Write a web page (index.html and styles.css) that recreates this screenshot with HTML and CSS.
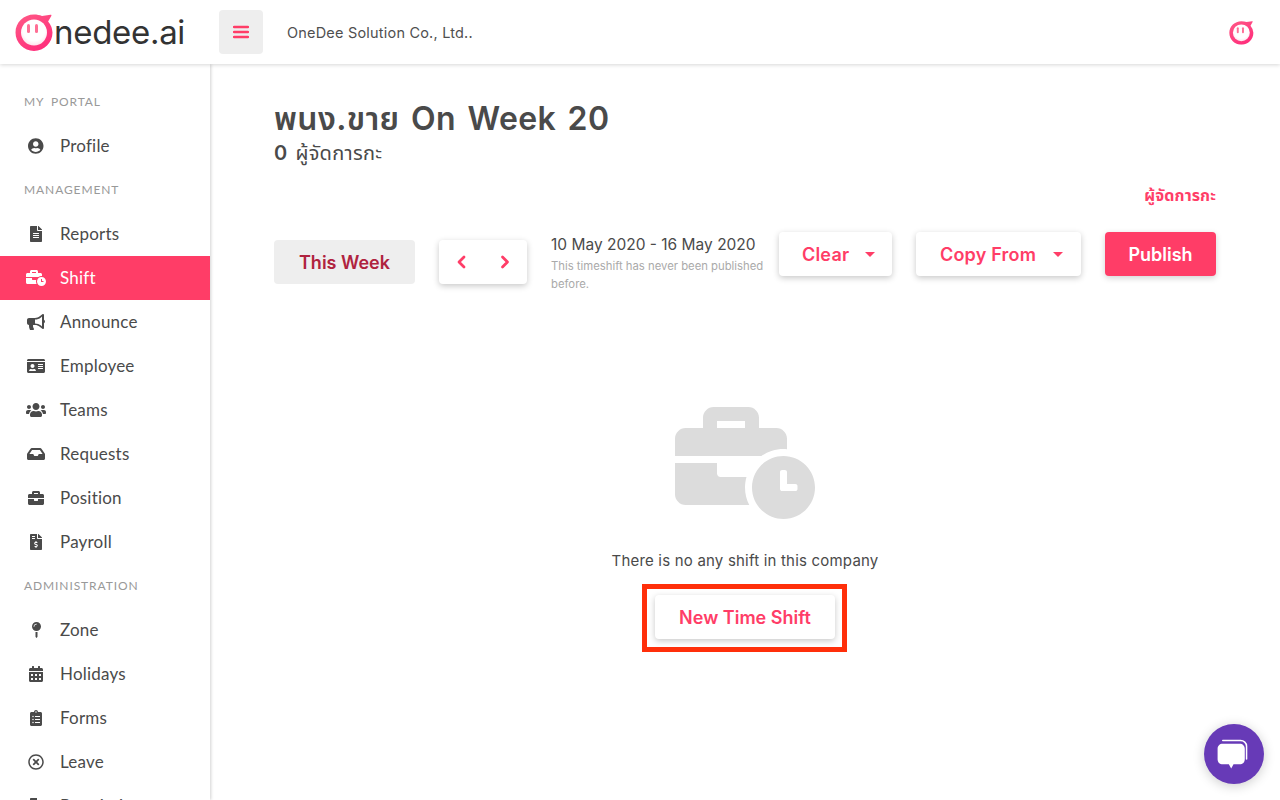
FILE: index.html
```html
<!DOCTYPE html>
<html lang="en">
<head>
<meta charset="utf-8">
<title>OneDee Shift</title>
<link rel="stylesheet" href="styles.css">
</head>
<body>
<header class="topbar">
  <div class="logo">
    <svg class="logo-mark" viewBox="0 0 40 38"><use href="#face"/></svg>
    <span class="logo-text">nedee.ai</span>
  </div>
  <button class="menu-btn" aria-label="Menu">
    <svg viewBox="0 0 16 14" class="menu-icon"><path d="M1 2h14M1 7h14M1 12h14"/></svg>
  </button>
  <span class="company">OneDee Solution Co., Ltd..</span>
  <svg class="avatar" viewBox="0 0 40 38"><use href="#face"/></svg>
</header>

<div class="layout">
  <nav class="sidebar">
    <div class="nav-label">MY PORTAL</div>
    <a class="nav-item"><span class="nav-ico"><svg viewBox="0 0 496 512"><path d="M248 8C111 8 0 119 0 256s111 248 248 248 248-111 248-248S385 8 248 8zm0 96c48.6 0 88 39.4 88 88s-39.4 88-88 88-88-39.4-88-88 39.4-88 88-88zm0 344c-58.7 0-111.3-26.6-146.5-68.2 18.8-35.4 55.6-59.8 98.5-59.8 2.4 0 4.8.4 7.1 1.1 13 4.2 26.6 6.9 40.9 6.9 14.3 0 28-2.7 40.9-6.9 2.3-.7 4.7-1.1 7.1-1.1 42.9 0 79.7 24.4 98.5 59.8C359.3 421.4 306.7 448 248 448z"/></svg></span><span class="nav-text">Profile</span></a>
    <div class="nav-label">MANAGEMENT</div>
    <a class="nav-item"><span class="nav-ico"><svg viewBox="0 0 384 512"><path d="M224 136V0H24C10.7 0 0 10.7 0 24v464c0 13.3 10.7 24 24 24h336c13.3 0 24-10.7 24-24V160H248c-13.2 0-24-10.8-24-24zm64 236c0 6.6-5.4 12-12 12H108c-6.6 0-12-5.4-12-12v-8c0-6.6 5.4-12 12-12h168c6.6 0 12 5.4 12 12v8zm0-64c0 6.6-5.4 12-12 12H108c-6.6 0-12-5.4-12-12v-8c0-6.6 5.4-12 12-12h168c6.6 0 12 5.4 12 12v8zm0-72v8c0 6.6-5.4 12-12 12H108c-6.6 0-12-5.4-12-12v-8c0-6.6 5.4-12 12-12h168c6.6 0 12 5.4 12 12zm96-114.1v6.1H256V0h6.1c6.4 0 12.5 2.5 17 7l97.9 98c4.5 4.5 7 10.6 7 16.9z"/></svg></span><span class="nav-text">Reports</span></a>
    <a class="nav-item is-active"><span class="nav-ico"><svg viewBox="0 0 640 512"><use href="#business-time"/></svg></span><span class="nav-text">Shift</span></a>
    <a class="nav-item"><span class="nav-ico"><svg viewBox="0 0 576 512"><path d="M544 184.88V32.01C544 23.26 537.02 0 512.01 0H512c-7.12 0-14.19 2.38-19.98 7.02l-85.03 68.03C364.28 109.19 310.66 128 256 128H64c-35.35 0-64 28.65-64 64v96c0 35.35 28.65 64 64 64l-.48 32c0 39.77 9.26 77.35 25.56 110.94 5.19 10.69 16.52 17.06 28.4 17.06h74.28c26.05 0 41.69-29.84 25.9-50.56-16.4-21.52-26.15-48.36-26.15-77.44 0-11.11 1.62-21.79 4.41-32H256c54.66 0 108.28 18.81 150.98 52.95l85.03 68.03a32.023 32.023 0 0 0 19.98 7.02c24.92 0 32-22.78 32-32V295.13c19.05-11.09 32-31.49 32-55.12.01-23.64-12.94-44.04-31.99-55.13zM480 397.39l-33.02-26.41C392.96 327.77 325.51 304 256 304v-128c69.51 0 136.96-23.77 190.98-66.98L480 82.61v314.78z"/></svg></span><span class="nav-text">Announce</span></a>
    <a class="nav-item"><span class="nav-ico"><svg viewBox="0 0 576 512"><path d="M528 32H48C21.5 32 0 53.5 0 80v16h576V80c0-26.5-21.5-48-48-48zM0 432c0 26.5 21.5 48 48 48h480c26.5 0 48-21.5 48-48V128H0v304zm352-232c0-4.4 3.6-8 8-8h144c4.4 0 8 3.6 8 8v16c0 4.4-3.6 8-8 8H360c-4.4 0-8-3.6-8-8v-16zm0 64c0-4.4 3.6-8 8-8h144c4.4 0 8 3.6 8 8v16c0 4.4-3.6 8-8 8H360c-4.4 0-8-3.6-8-8v-16zm0 64c0-4.4 3.6-8 8-8h144c4.4 0 8 3.6 8 8v16c0 4.4-3.6 8-8 8H360c-4.4 0-8-3.6-8-8v-16zM176 192c35.3 0 64 28.7 64 64s-28.7 64-64 64-64-28.7-64-64 28.7-64 64-64zM67.1 396.2C75.5 370.5 99.6 352 128 352h8.2c12.3 5.1 25.7 8 39.8 8s27.6-2.9 39.8-8h8.2c28.4 0 52.5 18.5 60.9 44.2 3.2 9.9-5.2 19.8-15.6 19.8H82.7c-10.4 0-18.8-10-15.6-19.8z"/></svg></span><span class="nav-text">Employee</span></a>
    <a class="nav-item"><span class="nav-ico"><svg viewBox="0 0 640 512"><path d="M96 224c35.3 0 64-28.7 64-64s-28.7-64-64-64-64 28.7-64 64 28.7 64 64 64zm448 0c35.3 0 64-28.7 64-64s-28.7-64-64-64-64 28.7-64 64 28.7 64 64 64zm32 32h-64c-17.6 0-33.5 7.1-45.1 18.6 40.3 22.1 68.9 62 75.1 109.4h66c17.7 0 32-14.3 32-32v-32c0-35.3-28.7-64-64-64zm-256 0c61.9 0 112-50.1 112-112S381.9 32 320 32 208 82.1 208 144s50.1 112 112 112zm76.8 32h-8.3c-20.8 10-43.9 16-68.5 16s-47.6-6-68.5-16h-8.3C179.6 288 128 339.6 128 403.2V432c0 26.5 21.5 48 48 48h288c26.5 0 48-21.5 48-48v-28.8c0-63.6-51.6-115.2-115.2-115.2zm-223.7-13.4C161.5 263.1 145.6 256 128 256H64c-35.3 0-64 28.7-64 64v32c0 17.7 14.3 32 32 32h65.9c6.3-47.4 34.9-87.3 75.2-109.4z"/></svg></span><span class="nav-text">Teams</span></a>
    <a class="nav-item"><span class="nav-ico"><svg viewBox="0 0 576 512"><path d="M567.938 243.908L462.25 85.374A48.003 48.003 0 0 0 422.311 64H153.689a48 48 0 0 0-39.938 21.374L8.062 243.908A47.994 47.994 0 0 0 0 270.533V400c0 26.51 21.49 48 48 48h480c26.51 0 48-21.49 48-48V270.533a47.994 47.994 0 0 0-8.062-26.625zM162.252 128h251.497l85.333 128H376l-32 64H232l-32-64H76.918l85.334-128z"/></svg></span><span class="nav-text">Requests</span></a>
    <a class="nav-item"><span class="nav-ico"><svg viewBox="0 0 512 512"><path d="M320 336c0 8.84-7.16 16-16 16h-96c-8.84 0-16-7.16-16-16v-48H0v144c0 25.6 22.4 48 48 48h416c25.6 0 48-21.5 48-48V288H320v48zm144-208h-80V80c0-25.6-22.4-48-48-48H176c-25.6 0-48 22.4-48 48v48H48c-25.6 0-48 22.4-48 48v80h512v-80c0-25.6-22.4-48-48-48zm-144 0H192V96h128v32z"/></svg></span><span class="nav-text">Position</span></a>
    <a class="nav-item"><span class="nav-ico"><svg viewBox="0 0 384 512"><path d="M377 105L279.1 7c-4.5-4.5-10.6-7-17-7H256v128h128v-6.1c0-6.3-2.5-12.4-7-16.9zm-153 31V0H24C10.7 0 0 10.7 0 24v464c0 13.3 10.7 24 24 24h336c13.3 0 24-10.7 24-24V160H248c-13.2 0-24-10.8-24-24zM64 72c0-4.42 3.58-8 8-8h80c4.42 0 8 3.58 8 8v16c0 4.42-3.58 8-8 8H72c-4.42 0-8-3.58-8-8V72zm0 80v-16c0-4.42 3.58-8 8-8h80c4.42 0 8 3.58 8 8v16c0 4.42-3.58 8-8 8H72c-4.42 0-8-3.58-8-8zm144 263.88V440c0 4.42-3.58 8-8 8h-16c-4.42 0-8-3.58-8-8v-24.29c-11.29-.58-22.27-4.52-31.37-11.35-3.9-2.93-4.1-8.77-.57-12.14l11.75-11.21c2.77-2.64 6.89-2.76 10.13-.73 3.87 2.42 8.26 3.72 12.82 3.72h28.11c6.5 0 11.8-5.92 11.8-13.19 0-5.95-3.61-11.19-8.77-12.73l-45-13.5c-18.59-5.58-31.58-23.42-31.58-43.39 0-24.52 19.05-44.44 42.67-45.07V232c0-4.42 3.58-8 8-8h16c4.42 0 8 3.58 8 8v24.29c11.29.58 22.27 4.51 31.37 11.35 3.9 2.93 4.1 8.77.57 12.14l-11.75 11.21c-2.77 2.64-6.89 2.76-10.13.73-3.87-2.43-8.26-3.72-12.82-3.72h-28.11c-6.5 0-11.8 5.92-11.8 13.19 0 5.95 3.61 11.19 8.77 12.73l45 13.5c18.59 5.58 31.58 23.42 31.58 43.39 0 24.53-19.05 44.44-42.67 45.07z"/></svg></span><span class="nav-text">Payroll</span></a>
    <div class="nav-label">ADMINISTRATION</div>
    <a class="nav-item"><span class="nav-ico"><svg viewBox="0 0 288 512"><path d="M112 316.94v156.69l22.02 33.02c4.75 7.12 15.22 7.12 19.97 0L176 473.63V316.94c-10.39 1.92-21.06 3.06-32 3.06s-21.61-1.14-32-3.06zM144 0C64.47 0 0 64.47 0 144s64.47 144 144 144 144-64.47 144-144S223.53 0 144 0zm0 76c-37.5 0-68 30.5-68 68 0 6.62-5.38 12-12 12s-12-5.38-12-12c0-50.73 41.28-92 92-92 6.62 0 12 5.38 12 12s-5.38 12-12 12z"/></svg></span><span class="nav-text">Zone</span></a>
    <a class="nav-item"><span class="nav-ico"><svg viewBox="0 0 448 512"><path d="M0 464c0 26.5 21.5 48 48 48h352c26.5 0 48-21.5 48-48V192H0v272zm320-196c0-6.6 5.4-12 12-12h40c6.6 0 12 5.4 12 12v40c0 6.6-5.4 12-12 12h-40c-6.6 0-12-5.4-12-12v-40zm0 128c0-6.6 5.4-12 12-12h40c6.6 0 12 5.4 12 12v40c0 6.6-5.4 12-12 12h-40c-6.6 0-12-5.4-12-12v-40zM192 268c0-6.6 5.4-12 12-12h40c6.6 0 12 5.4 12 12v40c0 6.6-5.4 12-12 12h-40c-6.6 0-12-5.4-12-12v-40zm0 128c0-6.6 5.4-12 12-12h40c6.6 0 12 5.4 12 12v40c0 6.6-5.4 12-12 12h-40c-6.6 0-12-5.4-12-12v-40zM64 268c0-6.6 5.4-12 12-12h40c6.6 0 12 5.4 12 12v40c0 6.6-5.4 12-12 12H76c-6.6 0-12-5.4-12-12v-40zm0 128c0-6.6 5.4-12 12-12h40c6.6 0 12 5.4 12 12v40c0 6.6-5.4 12-12 12H76c-6.6 0-12-5.4-12-12v-40zM400 64h-48V16c0-8.8-7.2-16-16-16h-32c-8.8 0-16 7.2-16 16v48H160V16c0-8.8-7.2-16-16-16h-32c-8.8 0-16 7.2-16 16v48H48C21.5 64 0 85.5 0 112v48h448v-48c0-26.5-21.5-48-48-48z"/></svg></span><span class="nav-text">Holidays</span></a>
    <a class="nav-item"><span class="nav-ico"><svg viewBox="0 0 384 512"><path d="M336 64h-80c0-35.3-28.7-64-64-64s-64 28.7-64 64H48C21.5 64 0 85.5 0 112v352c0 26.5 21.5 48 48 48h288c26.5 0 48-21.5 48-48V112c0-26.5-21.5-48-48-48zM96 424c-13.3 0-24-10.7-24-24s10.7-24 24-24 24 10.7 24 24-10.7 24-24 24zm0-96c-13.3 0-24-10.7-24-24s10.7-24 24-24 24 10.7 24 24-10.7 24-24 24zm0-96c-13.3 0-24-10.7-24-24s10.7-24 24-24 24 10.7 24 24-10.7 24-24 24zm96-192c13.3 0 24 10.7 24 24s-10.7 24-24 24-24-10.7-24-24 10.7-24 24-24zm128 368c0 4.4-3.6 8-8 8H168c-4.4 0-8-3.6-8-8v-16c0-4.4 3.6-8 8-8h144c4.4 0 8 3.6 8 8v16zm0-96c0 4.4-3.6 8-8 8H168c-4.4 0-8-3.6-8-8v-16c0-4.4 3.6-8 8-8h144c4.4 0 8 3.6 8 8v16zm0-96c0 4.4-3.6 8-8 8H168c-4.4 0-8-3.6-8-8v-16c0-4.4 3.6-8 8-8h144c4.4 0 8 3.6 8 8v16z"/></svg></span><span class="nav-text">Forms</span></a>
    <a class="nav-item"><span class="nav-ico"><svg viewBox="0 0 512 512"><path d="M256 8C119 8 8 119 8 256s111 248 248 248 248-111 248-248S393 8 256 8zm0 448c-110.5 0-200-89.5-200-200S145.5 56 256 56s200 89.5 200 200-89.5 200-200 200zm101.8-262.2L295.6 256l62.2 62.2c4.7 4.7 4.7 12.3 0 17l-22.6 22.6c-4.7 4.7-12.3 4.7-17 0L256 295.6l-62.2 62.2c-4.7 4.7-12.3 4.7-17 0l-22.6-22.6c-4.7-4.7-4.7-12.3 0-17l62.2-62.2-62.2-62.2c-4.7-4.7-4.7-12.3 0-17l22.6-22.6c4.7-4.7 12.3-4.7 17 0l62.2 62.2 62.2-62.2c4.7-4.7 12.3-4.7 17 0l22.6 22.6c4.7 4.7 4.7 12.3 0 17z"/></svg></span><span class="nav-text">Leave</span></a>
    <a class="nav-item"><span class="nav-ico"><svg viewBox="0 0 384 512"><path d="M224 136V0H24C10.7 0 0 10.7 0 24v464c0 13.3 10.7 24 24 24h336c13.3 0 24-10.7 24-24V160H248c-13.2 0-24-10.8-24-24z"/></svg></span><span class="nav-text">Permissions</span></a>
  </nav>

  <main class="content">
    <h1 class="title">พนง.ขาย On Week 20</h1>
    <p class="subtitle"><b class="count">0</b> ผู้จัดการกะ</p>
    <div class="manager-row"><a class="manager-link">ผู้จัดการกะ</a></div>

    <div class="toolbar">
      <button class="btn btn-week">This Week</button>
      <div class="btn-group">
        <button class="arrow" aria-label="Previous"><svg viewBox="0 0 10 16"><path d="M8 3 3 8l5 5"/></svg></button>
        <button class="arrow" aria-label="Next"><svg viewBox="0 0 10 16"><path d="M2.500 3l5 5-5 5"/></svg></button>
      </div>
      <div class="date-block">
        <div class="date-range">10 May 2020 - 16 May 2020</div>
        <div class="date-note">This timeshift has never been published before.</div>
      </div>
      <button class="btn btn-white btn-clear">Clear<span class="caret"></span></button>
      <button class="btn btn-white btn-copy">Copy From<span class="caret caret-copy"></span></button>
      <button class="btn btn-primary">Publish</button>
    </div>

    <section class="empty">
      <svg class="empty-icon" viewBox="0 0 640 512"><use href="#business-time"/></svg>
      <p class="empty-text">There is no any shift in this company</p>
      <div class="highlight">
        <button class="btn btn-white btn-new">New Time Shift</button>
      </div>
    </section>
  </main>
</div>

<button class="chat" aria-label="Chat">
  <svg viewBox="0 0 36 32"><path class="chat-back" d="M6 1.600h19c3.400 0 6.400 2.600 6.400 6.200v13.600"/><path class="chat-front" d="M6 5h18c3.300 0 5.500 2.200 5.500 5.500v11c0 3.300-2.200 5.500-5.500 5.500h-6.500L15 31.500 12.500 27H6c-3.300 0-5.500-2.200-5.500-5.500v-11C.5 7.200 2.700 5 6 5z"/></svg>
</button>

<svg class="defs" width="0" height="0">
  <defs>
    <linearGradient id="pink" x1="0" y1="0" x2="0.6" y2="1"><stop offset="0" stop-color="#ff5a86"/><stop offset="1" stop-color="#ff2f7c"/></linearGradient>
    <radialGradient id="inner" cx="0.500" cy="0.400" r="0.600"><stop offset="0.700" stop-color="#fff"/><stop offset="1" stop-color="#ffe3ec"/></radialGradient>
    <symbol id="face" viewBox="0 0 40 38">
      <path fill="url(#pink)" d="M19 1.500c3 0 5.600.5 8 1.500l8.500-1.200c.8-.1 1.200.5.800 1.200l-3.200 5.500A18.300 18.300 0 0 1 37.500 19.500C37.500 29.700 29.200 38 19 38S.5 29.700.5 19.500 8.800 1.500 19 1.500z"/>
      <circle cx="19" cy="19.500" r="13" fill="url(#inner)"/>
      <rect x="12" y="11" width="3" height="9" rx="1.500" fill="#ff6f95"/>
      <rect x="20" y="11" width="3" height="9" rx="1.500" fill="#ff6f95"/>
    </symbol>
    <symbol id="business-time" viewBox="0 0 640 512"><path d="M496 224c-79.59 0-144 64.41-144 144s64.41 144 144 144 144-64.41 144-144-64.41-144-144-144zm64 150.290c0 5.340-4.370 9.710-9.710 9.710h-60.570c-5.340 0-9.710-4.370-9.710-9.710v-76.570c0-5.340 4.370-9.710 9.710-9.710h12.570c5.340 0 9.710 4.370 9.710 9.710V352h38.290c5.340 0 9.710 4.370 9.710 9.710v12.580zM496 192c5.400 0 10.720.33 16 .81V144c0-25.600-22.400-48-48-48h-80V48c0-25.600-22.400-48-48-48H176c-25.600 0-48 22.400-48 48v48H48c-25.600 0-48 22.400-48 48v80h395.120c28.600-20.090 63.350-32 100.880-32zM320 96H192V64h128v32zm6.820 224H208c-8.840 0-16-7.160-16-16v-48H0v144c0 25.600 22.400 48 48 48h291.430C327.100 423.960 320 396.820 320 368c0-16.660 2.480-32.720 6.820-48z"/></symbol>
  </defs>
</svg>
</body>
</html>
```

FILE: styles.css
```css
* { box-sizing: border-box; }
html, body { margin: 0; height: 100%; }
body {
  height: 800px;
  overflow: hidden;
  background: #fff;
  color: #4a4a4a;
  font-family: "Inter", "Noto Sans", "Noto Sans Thai", "DejaVu Sans", sans-serif;
}
button { font: inherit; border: 0; cursor: pointer; }
p, h1 { margin: 0; }

.topbar {
  position: relative;
  z-index: 2;
  height: 64px;
  display: flex;
  align-items: center;
  background: #fff;
  box-shadow: 0 1px 4px rgba(0,0,0,.16);
}
.logo { width: 219px; padding-left: 15px; display: flex; align-items: center; }
.logo-mark { width: 40px; height: 38px; flex: none; }
.logo-text {
  margin-left: -1px;
  font-family: "Inter", sans-serif;
  font-size: 33px;
  font-weight: 400;
  letter-spacing: -.3px;
  color: #333;
}
.menu-btn {
  width: 44px; height: 44px;
  background: #eee;
  border-radius: 4px;
  display: flex; align-items: center; justify-content: center;
}
.menu-icon { width: 16px; height: 14px; fill: none; stroke: #ff3d67; stroke-width: 2.400; stroke-linecap: round; }
.company { margin-left: 24px; font-size: 14.500px; letter-spacing: .2px; color: #4f4f4f; }
.avatar { width: 26px; height: 25px; margin-left: auto; margin-right: 25px; }

.layout { display: flex; height: 736px; }
.sidebar {
  flex: none;
  width: 210px;
  padding-top: 16px;
  overflow: hidden;
  box-shadow: 1px 0 3px rgba(0,0,0,.18);
  font-family: "Lato", sans-serif;
}
.nav-label {
  height: 44px;
  line-height: 44px;
  padding-left: 24px;
  font-size: 12px;
  letter-spacing: .9px;
  word-spacing: 3px;
  color: #999;
}
.nav-item {
  height: 44px;
  display: flex;
  align-items: center;
  font-size: 17px;
  letter-spacing: .2px;
  color: #4a4a4a;
}
.nav-text { margin-bottom: 2px; }
.nav-item.is-active { background: #ff3d67; color: #fff; }
.nav-ico { width: 60px; padding-left: 12px; display: flex; justify-content: center; flex: none; }
.nav-ico svg { height: 16px; display: block; fill: currentColor; max-width: 22px; }

.content { flex: 1; padding: 0 64px; min-width: 0; }
.title { margin-top: 33px; font-size: 32px; line-height: 44px; font-weight: 600; color: #4a4a4a; letter-spacing: .4px; word-spacing: 3px; }
.subtitle { margin-top: -1px; font-size: 20px; line-height: 26px; color: #4a4a4a; word-spacing: 2px; letter-spacing: .3px; }
.count { font-weight: 600; }
.manager-row { display: flex; justify-content: flex-end; margin-top: 19px; height: 20px; line-height: 20px; }
.manager-link { font-size: 16px; font-weight: 700; color: #ff3d67; letter-spacing: .1px; }

.toolbar { display: flex; align-items: flex-start; margin-top: 27px; }
.btn { height: 44px; border-radius: 4px; font-size: 18px; font-weight: 600; }
.btn-week { width: 141px; margin-top: 8px; background: #eee; color: #b0233f; }
.btn-group {
  width: 88px; height: 44px;
  margin: 8px 24px 0;
  display: flex;
  background: #fff;
  border-radius: 4px;
  box-shadow: 0 2px 6px rgba(0,0,0,.22);
}
.arrow { width: 44px; height: 44px; background: transparent; display: flex; align-items: center; justify-content: center; }
.arrow svg { width: 10px; height: 16px; fill: none; stroke: #ff3d67; stroke-width: 2.800; stroke-linecap: round; stroke-linejoin: round; }
.date-block { width: 228px; }
.date-range { font-size: 15.500px; line-height: 25px; color: #4a4a4a; }
.date-note { width: 220px; font-size: 11.300px; line-height: 18px; color: #aaa; }
.btn-white { background: #fff; color: #ff3d67; box-shadow: 0 2px 6px rgba(0,0,0,.22); display: flex; align-items: center; justify-content: center; }
.btn-clear, .btn-copy { justify-content: flex-start; letter-spacing: .2px; }
.btn-clear { width: 113px; margin-right: 24px; padding-left: 23px; }
.btn-copy { width: 165px; margin-right: 24px; padding-left: 24px; }
.btn-primary { width: 111px; background: #ff3d67; color: #fff; box-shadow: 0 2px 6px rgba(0,0,0,.18); }
.caret { margin-left: 16px; width: 0; height: 0; border: 5.500px solid transparent; border-top-color: #ff3d67; border-bottom-width: 0; }
.caret-copy { margin-left: 17px; }

.empty { margin-top: 114px; display: flex; flex-direction: column; align-items: center; }
.empty-icon { width: 140px; height: 112px; fill: #dcdcdc; }
.empty-text { margin-top: 32px; font-size: 15px; line-height: 20px; color: #4a4a4a; letter-spacing: .2px; }
.highlight { margin-top: 13px; margin-right: 1px; padding: 6px 7px 8px 8px; border: 5px solid #ff2f0a; }
.btn-new { width: 180px; font-size: 18px; }

.chat {
  position: fixed;
  right: 16px; bottom: 16px;
  width: 60px; height: 60px;
  padding: 0;
  border-radius: 50%;
  background: #673ab7;
  box-shadow: 0 2px 12px rgba(0,0,0,.2);
  display: flex; align-items: center; justify-content: center;
}
.chat svg { width: 34px; height: 30px; }
.chat-front { fill: #fff; }
.chat-back { fill: none; stroke: #fff; stroke-width: 1.600; stroke-linecap: round; }
.defs { position: absolute; }
```
